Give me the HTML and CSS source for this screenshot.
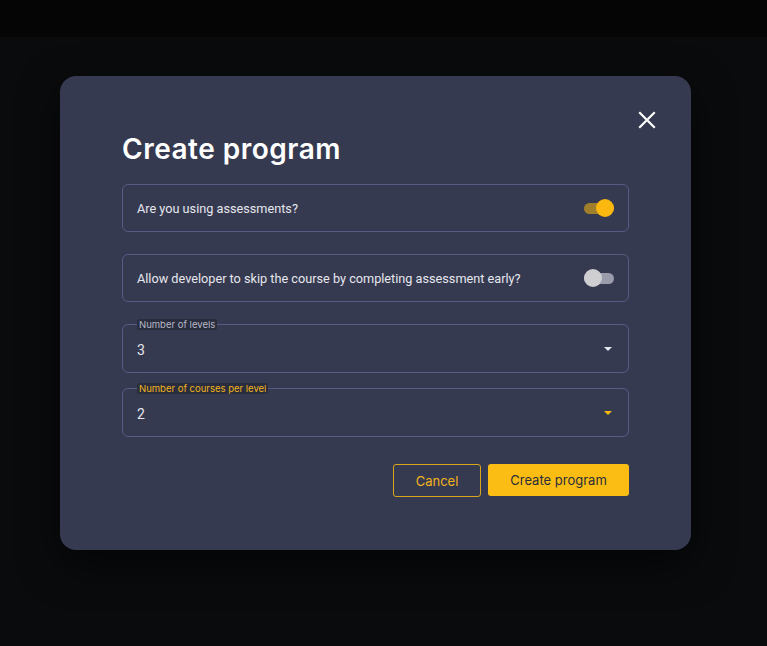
FILE: index.html
```html
<!DOCTYPE html>
<html lang="en">
<head>
<meta charset="UTF-8">
<meta name="viewport" content="width=device-width, initial-scale=1.0">
<title>Create program</title>
<link rel="stylesheet" href="styles.css">
</head>
<body>
<div class="topbar"></div>
<div class="overlay">
  <div class="dialog">
    <button class="close" aria-label="Close">
      <svg width="18" height="18" viewBox="0 0 18 18"><path d="M2 2L16 16M16 2L2 16" stroke="#fff" stroke-width="2.2" stroke-linecap="square"/></svg>
    </button>
    <h1 class="title">Create program</h1>
    <div class="fields">
      <div class="switch-row">
        <span>Are you using assessments?</span>
        <span class="toggle on"><span class="thumb"></span></span>
      </div>
      <div class="switch-row">
        <span>Allow developer to skip the course by completing assessment early?</span>
        <span class="toggle"><span class="thumb"></span></span>
      </div>
      <div class="select">
        <span class="label">Number of levels</span>
        <span class="value">3</span>
        <span class="arrow"></span>
      </div>
      <div class="select focused">
        <span class="label">Number of courses per level</span>
        <span class="value">2</span>
        <span class="arrow"></span>
      </div>
    </div>
    <div class="actions">
      <button class="btn outline">Cancel</button>
      <button class="btn primary">Create program</button>
    </div>
  </div>
</div>
</body>
</html>
```

FILE: styles.css
```css
body {
  margin: 0;
  background: #0a0b0d;
  font-family: Roboto, "Liberation Sans", sans-serif;
  height: 646px;
  overflow: hidden;
}
.topbar {
  height: 37px;
  background: #050505;
}
.overlay {
  padding: 39px 0 0 60px;
}
.dialog {
  position: relative;
  width: 631px;
  height: 474px;
  box-sizing: border-box;
  padding: 55px 62px 0 62px;
  background: #363a50;
  border-radius: 16px;
  box-shadow: 0 14px 40px rgba(0, 0, 0, 0.6);
}
.close {
  position: absolute;
  top: 35px;
  right: 35px;
  background: none;
  border: 0;
  padding: 0;
  width: 18px;
  height: 18px;
  cursor: pointer;
}
.title {
  margin: 0 0 17px;
  font-family: Inter, sans-serif;
  font-weight: 600;
  font-size: 28px;
  line-height: 36px;
  color: #fff;
  letter-spacing: 0.5px;
}
.fields {
  display: flex;
  flex-direction: column;
}
.switch-row {
  height: 48px;
  box-sizing: border-box;
  border: 1px solid #575c85;
  border-radius: 6px;
  display: flex;
  align-items: center;
  justify-content: space-between;
  padding: 0 14px 0 14px;
  margin-bottom: 22px;
  color: #e6e7ee;
  font-size: 12.7px;
}
.toggle {
  position: relative;
  width: 30px;
  height: 11px;
  border-radius: 6px;
  background: #9a9cab;
}
.toggle .thumb {
  position: absolute;
  top: -3.5px;
  left: 0;
  width: 18px;
  height: 18px;
  border-radius: 50%;
  background: #cfcfd2;
}
.toggle.on {
  background: #a07f2c;
}
.toggle.on .thumb {
  left: 12px;
  background: #fbb80f;
}
.select {
  position: relative;
  height: 49px;
  box-sizing: border-box;
  border: 1px solid #575c85;
  border-radius: 6px;
  display: flex;
  align-items: center;
  padding: 0 14px;
  margin-bottom: 15px;
  color: #e6e7ee;
  font-size: 14px;
}
.select .label {
  position: absolute;
  top: -6px;
  left: 14px;
  padding: 0 2px;
  font-size: 9.5px;
  line-height: 11px;
  font-family: Inter, sans-serif;
  color: #b6b8c6;
  background: #2a2d3e;
  border-radius: 2px;
}
.select .value {
  flex: 1;
  padding-top: 3px;
}
.select .arrow {
  width: 0;
  height: 0;
  border-left: 4px solid transparent;
  border-right: 4px solid transparent;
  border-top: 4px solid #e6e7ee;
  margin-right: 2px;
}
.select.focused .label {
  color: #f2b31c;
}
.select.focused .arrow {
  border-top-color: #fbb80f;
}
.actions {
  display: flex;
  justify-content: flex-end;
  gap: 7px;
  margin-top: 12px;
}
.btn {
  font-family: Inter, sans-serif;
  font-size: 13px;
  height: 33px;
  border-radius: 3px;
  cursor: pointer;
}
.btn.outline {
  width: 88px;
  background: transparent;
  border: 1px solid #d9a51c;
  color: #f2b31c;
}
.btn.primary {
  width: 141px;
  height: 32px;
  background: #fbbd14;
  border: 0;
  color: #2b2d3a;
}
```
